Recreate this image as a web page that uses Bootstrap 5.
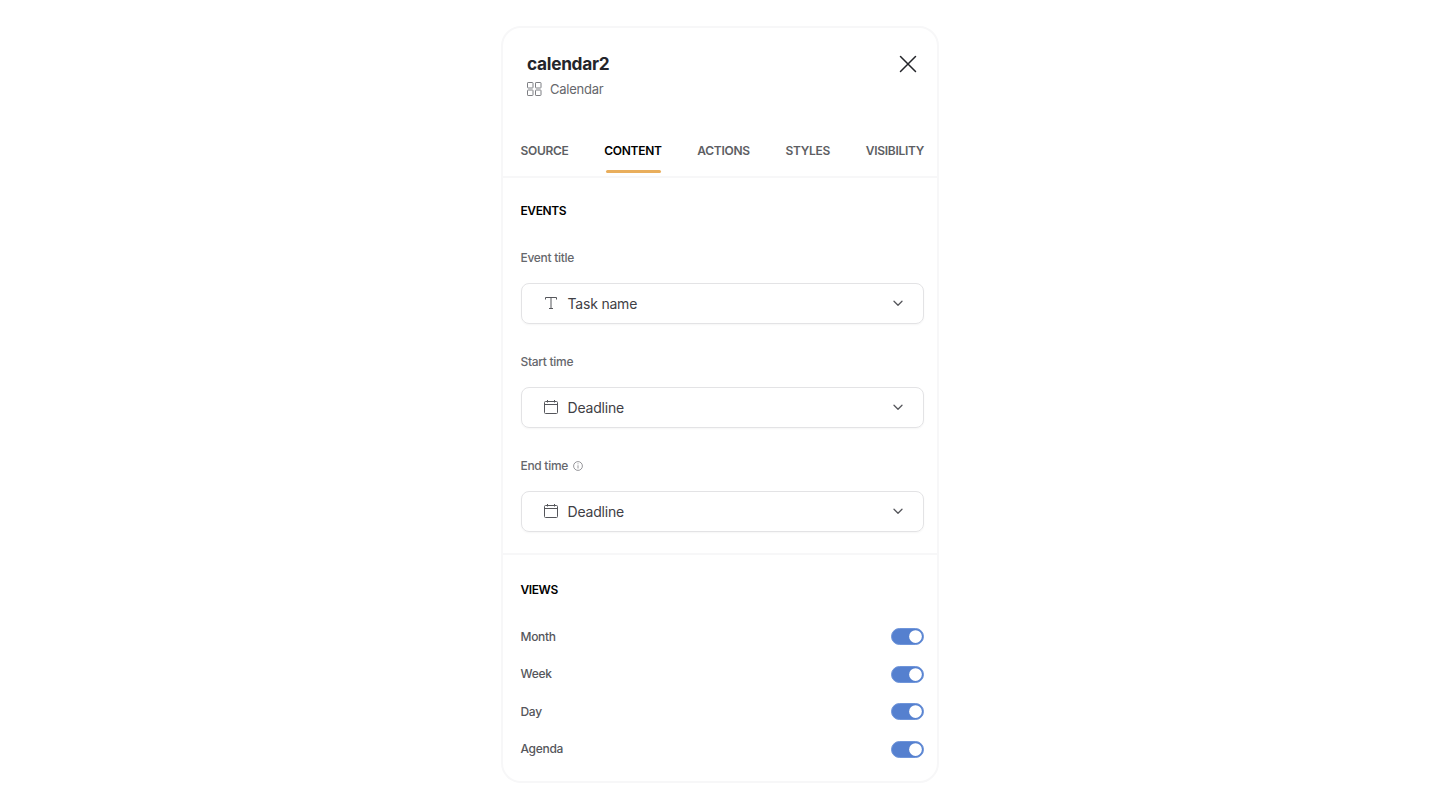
<!DOCTYPE html>
<html lang="en">
<head>
    <meta charset="UTF-8">
    <meta name="viewport" content="width=device-width, initial-scale=1">
    <title>calendar2</title>
    <link href="https://cdn.jsdelivr.net/npm/bootstrap@5.3.0/dist/css/bootstrap.min.css" rel="stylesheet">
    <style>
        body {
            font-family: Inter, "Liberation Sans", sans-serif;
            background: #fff;
        }
        .side-panel {
            width: 438px;
            height: 757px;
            margin-top: 26px;
            border: 2px solid #f7f7f8;
            border-radius: 20px;
            background: #fff;
        }
        .panel-head {
            padding: 25px 20px 0 24px;
            height: 98px;
        }
        .panel-title {
            font-size: 17.3px;
            line-height: 22px;
            font-weight: 700;
            color: #24252a;
            letter-spacing: -.3px;
        }
        .panel-type {
            font-size: 13px;
            line-height: 16px;
            color: #66676c;
            margin-top: 6px;
            gap: 8px;
            letter-spacing: -.25px;
        }
        .close-x {
            margin-top: 2px;
            line-height: 0;
        }
        .tab-row {
            padding: 0 13px 0 17.5px;
            height: 52px;
            border-bottom: 2px solid #f7f7f8;
        }
        .tab-row .nav-link {
            padding: 0;
            height: 50px;
            line-height: 50px;
            font-size: 12px;
            font-weight: 600;
            color: #5d5e63;
            position: relative;
            letter-spacing: -.3px;
        }
        .tab-row .nav-link.active {
            color: #000;
        }
        .tab-row .nav-link.active::after {
            content: "";
            position: absolute;
            left: 2px;
            right: 1px;
            bottom: 3px;
            height: 3px;
            border-radius: 2px;
            background: #e9ae5c;
        }
        .panel-section {
            padding: 25px 13px 21px 17.5px;
        }
        .views-section {
            padding-top: 27px;
        }
        .section-border {
            border-bottom: 2px solid #f7f7f8;
        }
        .section-label {
            font-size: 12px;
            line-height: 15px;
            font-weight: 600;
            color: #000;
            margin-bottom: 32px;
            letter-spacing: -.4px;
        }
        .views-section .section-label {
            margin-bottom: 31px;
        }
        .field-label {
            font-size: 12px;
            line-height: 16px;
            font-weight: 500;
            color: #66676c;
            margin-bottom: 17px;
            gap: 5px;
            letter-spacing: -.3px;
        }
        .pick-box {
            height: 41px;
            border: 1px solid #e3e3e5;
            border-radius: 8px;
            padding: 0 19px 1px 22px;
            font-size: 14px;
            color: #3f4045;
            box-shadow: 0 1px 2px rgba(0, 0, 0, .04);
            margin-bottom: 30px;
            gap: 10px;
            letter-spacing: -.2px;
        }
        .pick-box.last-pick {
            margin-bottom: 0;
        }
        .pick-box .pick-text {
            flex-grow: 1;
        }
        .view-row {
            height: 17px;
            margin-bottom: 20.5px;
            font-size: 12px;
            font-weight: 500;
            color: #55565b;
            letter-spacing: -.3px;
        }
        .view-row .form-check {
            min-height: 0;
            margin: 0;
            padding: 0;
            line-height: 0;
        }
        .view-row .form-check-input {
            width: 33.5px;
            height: 17px;
            margin: 0;
            float: none;
            background-color: #5580cf;
            border: 1px solid #6f95da;
            box-shadow: none;
            background-image: url("data:image/svg+xml,%3csvg xmlns='http://www.w3.org/2000/svg' viewBox='-4 -4 8 8'%3e%3ccircle r='3.4' fill='%23fff'/%3e%3c/svg%3e");
        }
    </style>
</head>
<body>

<div class="d-flex justify-content-center">
    <div class="side-panel overflow-hidden">
        <div class="panel-head d-flex justify-content-between align-items-start">
            <div>
                <div class="panel-title">calendar2</div>
                <div class="panel-type d-flex align-items-center">
                    <svg width="15" height="14" viewBox="0 0 15 14" fill="none" stroke="#7d7e83" stroke-width="1">
                        <rect x="0.5" y="0.5" width="5.5" height="5.5" rx=".6"/>
                        <rect x="8.5" y="0.5" width="5.5" height="5.5" rx=".6"/>
                        <rect x="0.5" y="8" width="5.5" height="5.5" rx=".6"/>
                        <rect x="8.5" y="8" width="5.5" height="5.5" rx=".6"/>
                    </svg>
                    <span>Calendar</span>
                </div>
            </div>
            <div class="close-x">
                <svg width="18" height="18" viewBox="0 0 18 18" fill="none" stroke="#24252a" stroke-width="1.5" stroke-linecap="round">
                    <path d="M1.5 1.5L16.5 16.5M16.5 1.5L1.5 16.5"/>
                </svg>
            </div>
        </div>

        <ul class="nav tab-row justify-content-between">
            <li class="nav-item"><a class="nav-link" href="#">SOURCE</a></li>
            <li class="nav-item"><a class="nav-link active" href="#">CONTENT</a></li>
            <li class="nav-item"><a class="nav-link" href="#">ACTIONS</a></li>
            <li class="nav-item"><a class="nav-link" href="#">STYLES</a></li>
            <li class="nav-item"><a class="nav-link" href="#">VISIBILITY</a></li>
        </ul>

        <div class="panel-section section-border">
            <div class="section-label">EVENTS</div>

            <div class="field-label d-flex align-items-center">Event title</div>
            <div class="pick-box d-flex align-items-center">
                <svg width="14" height="14" viewBox="0 0 14 14" fill="none" stroke="#55565b" stroke-width="1">
                    <path d="M1.5 3.5V1.5H12.5V3.5M7 1.5V12.5M5 12.5H9"/>
                </svg>
                <span class="pick-text">Task name</span>
                <svg width="12" height="12" viewBox="0 0 12 12" fill="none" stroke="#55565b" stroke-width="1.3" stroke-linecap="round" stroke-linejoin="round">
                    <path d="M2 4.2L6 8.2L10 4.2"/>
                </svg>
            </div>

            <div class="field-label d-flex align-items-center">Start time</div>
            <div class="pick-box d-flex align-items-center">
                <svg width="14" height="14" viewBox="0 0 14 14" fill="none" stroke="#55565b" stroke-width="1">
                    <rect x="0.5" y="1.5" width="13" height="12" rx="1"/>
                    <path d="M0.5 4.5H13.5M3.5 0V2.5M10.5 0V2.5"/>
                </svg>
                <span class="pick-text">Deadline</span>
                <svg width="12" height="12" viewBox="0 0 12 12" fill="none" stroke="#55565b" stroke-width="1.3" stroke-linecap="round" stroke-linejoin="round">
                    <path d="M2 4.2L6 8.2L10 4.2"/>
                </svg>
            </div>

            <div class="field-label d-flex align-items-center">
                <span>End time</span>
                <svg width="10" height="10" viewBox="0 0 10 10" fill="none" stroke="#7d7e83" stroke-width=".8">
                    <circle cx="5" cy="5" r="4.4"/>
                    <path d="M5 4.3V7.5M5 2.4V3.3"/>
                </svg>
            </div>
            <div class="pick-box last-pick d-flex align-items-center">
                <svg width="14" height="14" viewBox="0 0 14 14" fill="none" stroke="#55565b" stroke-width="1">
                    <rect x="0.5" y="1.5" width="13" height="12" rx="1"/>
                    <path d="M0.5 4.5H13.5M3.5 0V2.5M10.5 0V2.5"/>
                </svg>
                <span class="pick-text">Deadline</span>
                <svg width="12" height="12" viewBox="0 0 12 12" fill="none" stroke="#55565b" stroke-width="1.3" stroke-linecap="round" stroke-linejoin="round">
                    <path d="M2 4.2L6 8.2L10 4.2"/>
                </svg>
            </div>
        </div>

        <div class="panel-section views-section">
            <div class="section-label">VIEWS</div>
            <div class="view-row d-flex justify-content-between align-items-center">
                <span>Month</span>
                <div class="form-check form-switch"><input class="form-check-input" type="checkbox" checked></div>
            </div>
            <div class="view-row d-flex justify-content-between align-items-center">
                <span>Week</span>
                <div class="form-check form-switch"><input class="form-check-input" type="checkbox" checked></div>
            </div>
            <div class="view-row d-flex justify-content-between align-items-center">
                <span>Day</span>
                <div class="form-check form-switch"><input class="form-check-input" type="checkbox" checked></div>
            </div>
            <div class="view-row d-flex justify-content-between align-items-center">
                <span>Agenda</span>
                <div class="form-check form-switch"><input class="form-check-input" type="checkbox" checked></div>
            </div>
        </div>
    </div>
</div>

<script src="https://cdn.jsdelivr.net/npm/bootstrap@5.3.0/dist/js/bootstrap.bundle.min.js"></script>
</body>
</html>
